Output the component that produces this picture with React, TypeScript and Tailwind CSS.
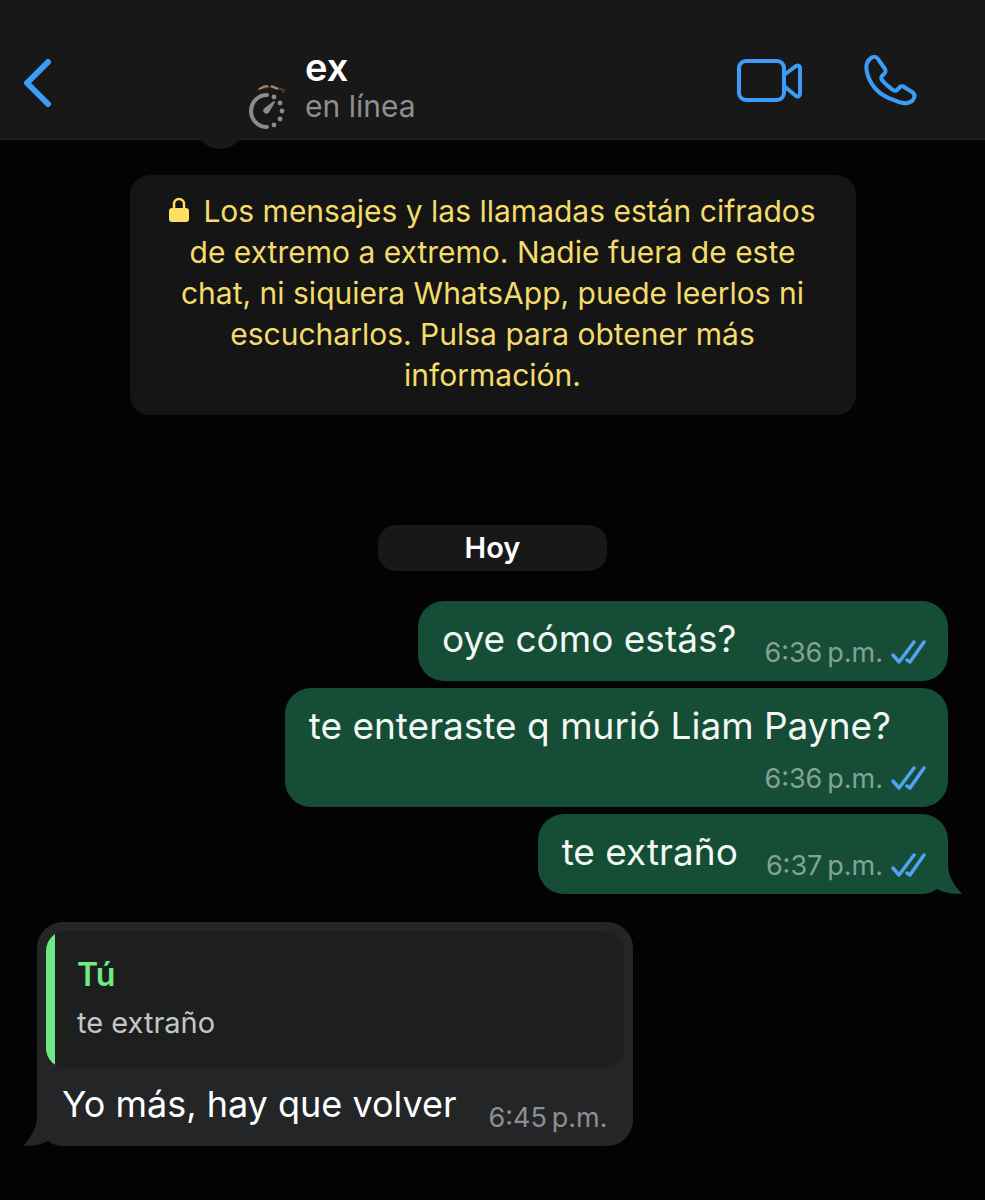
import type { ReactNode } from 'react';

interface OutgoingMessage {
  id: number;
  text: string;
  time: string;
  stacked?: boolean;
  tail?: boolean;
}

const OUTGOING: OutgoingMessage[] = [
  { id: 1, text: 'oye cómo estás?', time: '6:36\u2009p.m.' },
  { id: 2, text: 'te enteraste q murió Liam Payne?', time: '6:36\u2009p.m.', stacked: true },
  { id: 3, text: 'te extraño', time: '6:37\u2009p.m.', tail: true },
];

function BackIcon() {
  return (
    <svg width="30" height="50" viewBox="0 0 30 50" fill="none" stroke="#3B9DF8" strokeWidth="6" strokeLinecap="round" strokeLinejoin="round" aria-hidden="true">
      <path d="M26 4 5 25l21 21" />
    </svg>
  );
}

function TimerIcon() {
  return (
    <svg width="38" height="48" viewBox="0 0 38 48" fill="none" aria-hidden="true">
      <path d="M9 6Q19 0 35 6l-1 3" stroke="#4a3a2e" strokeWidth="2" />
      <path d="M10 5Q15 2 19 2M22 2l7 3" stroke="#a58e7c" strokeWidth="2" />
      <path d="M18 11a16 16 0 0 0 0 32" stroke="#8b8b8e" strokeWidth="4" strokeLinecap="round" />
      <path d="m16 25 9-7-6 10a2 2 0 0 1-3-3Z" fill="#8b8b8e" stroke="#8b8b8e" strokeWidth="2" strokeLinejoin="round" />
      <g fill="#8b8b8e">
        <circle cx="25" cy="13" r="2.400" />
        <circle cx="31" cy="19" r="2.400" />
        <circle cx="33" cy="27" r="2.400" />
        <circle cx="31" cy="35" r="2.400" />
        <circle cx="25" cy="41" r="2.400" />
      </g>
    </svg>
  );
}

function VideoIcon() {
  return (
    <svg width="66" height="46" viewBox="0 0 66 46" fill="none" stroke="#3B9DF8" strokeWidth="4" strokeLinejoin="round" aria-hidden="true">
      <rect x="2" y="3" width="45" height="39" rx="7" />
      <path d="m47 17 12-9c2-1 4 0 4 2v26c0 2-2 3-4 2L47 28" />
    </svg>
  );
}

function PhoneIcon() {
  return (
    <svg width="54" height="54" viewBox="0 0 54 54" fill="none" stroke="#3B9DF8" strokeWidth="4" strokeLinejoin="round" aria-hidden="true">
      <path d="M6 6C9 2 13 2 15 5l7 10c1 2 1 3-1 5l-2 2c-1 1-1 3 0 4C22 30 26 33 30 36c2 1 3 1 4 0l3-3c1-1 3-1 4 0l8 5c3 2 3 5 1 8-4 4-11 4-19 0C18 42 9 33 5 22 3 16 2 10 6 6Z" />
    </svg>
  );
}

function LockIcon() {
  return (
    <svg width="20" height="26" viewBox="0 0 20 26" className="mr-3.5 inline-block align-[-1px]" aria-hidden="true">
      <path d="M5 12V7a5 5 0 0 1 10 0v5" fill="none" stroke="#FDE063" strokeWidth="2.500" />
      <rect x="0" y="11" width="20" height="14" rx="3" fill="#FDE063" />
    </svg>
  );
}

function ReadTicks() {
  return (
    <svg width="36" height="26" viewBox="0 0 36 26" fill="none" stroke="#53A2F3" strokeWidth="3.500" strokeLinecap="round" strokeLinejoin="round" aria-label="Leído" role="img">
      <path d="m2 15 6 7L23 2" />
      <path d="m16 20 3 2L33 2" />
    </svg>
  );
}

function Tail({ className }: { className: string }) {
  return (
    <svg width="42" height="40" viewBox="0 0 42 40" fill="currentColor" className={className} aria-hidden="true">
      <path d="M28 0v10c0 11 5 20 14 30-9 0-18-1-25-5-4 3-9 5-17 5V0Z" />
    </svg>
  );
}

function MessageTime({ children }: { children: ReactNode }) {
  return <time className="whitespace-nowrap text-[27px] leading-8">{children}</time>;
}

function OutgoingBubble({ message }: { message: OutgoingMessage }) {
  const layout = message.stacked ? 'flex-col gap-[15px]' : 'gap-7';
  const corner = message.tail ? 'rounded-[26px] rounded-br-none' : 'rounded-[26px]';

  return (
    <li className={`relative flex bg-[#154D37] pb-3 pl-6 pr-[21px] pt-4 ${layout} ${corner}`}>
      {message.tail && (
        <>
          <span className="absolute bottom-0 right-0 size-7 bg-[#030305]" />
          <Tail className="absolute -right-3.5 bottom-0 text-[#154D37]" />
        </>
      )}
      <p className={`whitespace-nowrap text-[37px] leading-[44px] text-[#F2F8F4] ${message.stacked ? 'pr-9' : 'pb-2'}`}>
        {message.text}
      </p>
      <div className="relative flex items-center gap-2 self-end text-[#83A396]">
        <MessageTime>{message.time}</MessageTime>
        <ReadTicks />
      </div>
    </li>
  );
}

function ChatHeader() {
  return (
    <header className="relative flex h-[140px] items-start border-b border-[#202023] bg-[#181818] pl-[22px] pr-[68px] pt-[54px]">
      <span className="absolute left-[196px] top-[101px] size-12 rounded-full bg-[#181818]" />
      <button type="button" aria-label="Atrás" className="mt-1">
        <BackIcon />
      </button>
      <div className="relative ml-[197px] mt-[30px]">
        <TimerIcon />
      </div>
      <div className="relative -mt-2 ml-[18px] flex-1">
        <h1 className="text-[38px] font-semibold leading-[42px] text-white">ex</h1>
        <p className="text-[30px] leading-9 text-[#8E8E93]">en línea</p>
      </div>
      <button type="button" aria-label="Videollamada" className="mt-1">
        <VideoIcon />
      </button>
      <button type="button" aria-label="Llamar" className="ml-[60px]">
        <PhoneIcon />
      </button>
    </header>
  );
}

function IncomingReply() {
  return (
    <li className="relative mt-7 self-start rounded-[26px] rounded-bl-none bg-[#242527] p-[9px] pb-0">
      <span className="absolute bottom-0 left-0 size-7 bg-[#030305]" />
      <Tail className="absolute -left-3.5 bottom-0 -scale-x-100 text-[#242527]" />
      <blockquote className="relative overflow-hidden rounded-[20px] bg-[#1D1F1E]">
        <div className="border-l-[9px] border-[#70EA87] pb-[25px] pl-[22px] pt-6">
          <p className="text-[32px] font-semibold leading-10 text-[#70EA87]">Tú</p>
          <p className="mt-2 text-[29px] leading-10 text-[#C5C6C6]">te extraño</p>
        </div>
      </blockquote>
      <div className="relative flex gap-8 px-4 pb-3 pt-[14px]">
        <p className="whitespace-nowrap pb-2 text-4xl leading-[44px] text-white">Yo más, hay que volver</p>
        <div className="self-end text-[#8D8E91]">
          <MessageTime>{'6:45\u2009p.m.'}</MessageTime>
        </div>
      </div>
    </li>
  );
}

export default function App() {
  return (
    <div className="min-h-screen overflow-hidden bg-[#030305] font-['Inter','Liberation_Sans',sans-serif]">
      <ChatHeader />
      <main className="flex flex-col px-[37px] pb-[52px] pt-[35px]">
        <p className="mx-auto w-[726px] max-w-full rounded-[20px] bg-[#151515] px-8 pb-[19px] pt-4 text-center text-[30px] leading-[41px] text-[#F3DC6B]">
          <LockIcon />
          Los mensajes y las llamadas están cifrados
          <br />
          de extremo a extremo. Nadie fuera de este
          <br />
          chat, ni siquiera WhatsApp, puede leerlos ni
          <br />
          escucharlos. Pulsa para obtener más
          <br />
          información.
        </p>
        <h2 className="mx-auto mt-[110px] w-[229px] rounded-[18px] bg-[#181818] py-[5px] text-center text-[29px] font-semibold leading-9 text-white">
          Hoy
        </h2>
        <ul className="mt-[30px] flex flex-col items-end gap-[7px]">
          {OUTGOING.map((message) => (
            <OutgoingBubble key={message.id} message={message} />
          ))}
        </ul>
        <ul className="flex flex-col">
          <IncomingReply />
        </ul>
      </main>
    </div>
  );
}
